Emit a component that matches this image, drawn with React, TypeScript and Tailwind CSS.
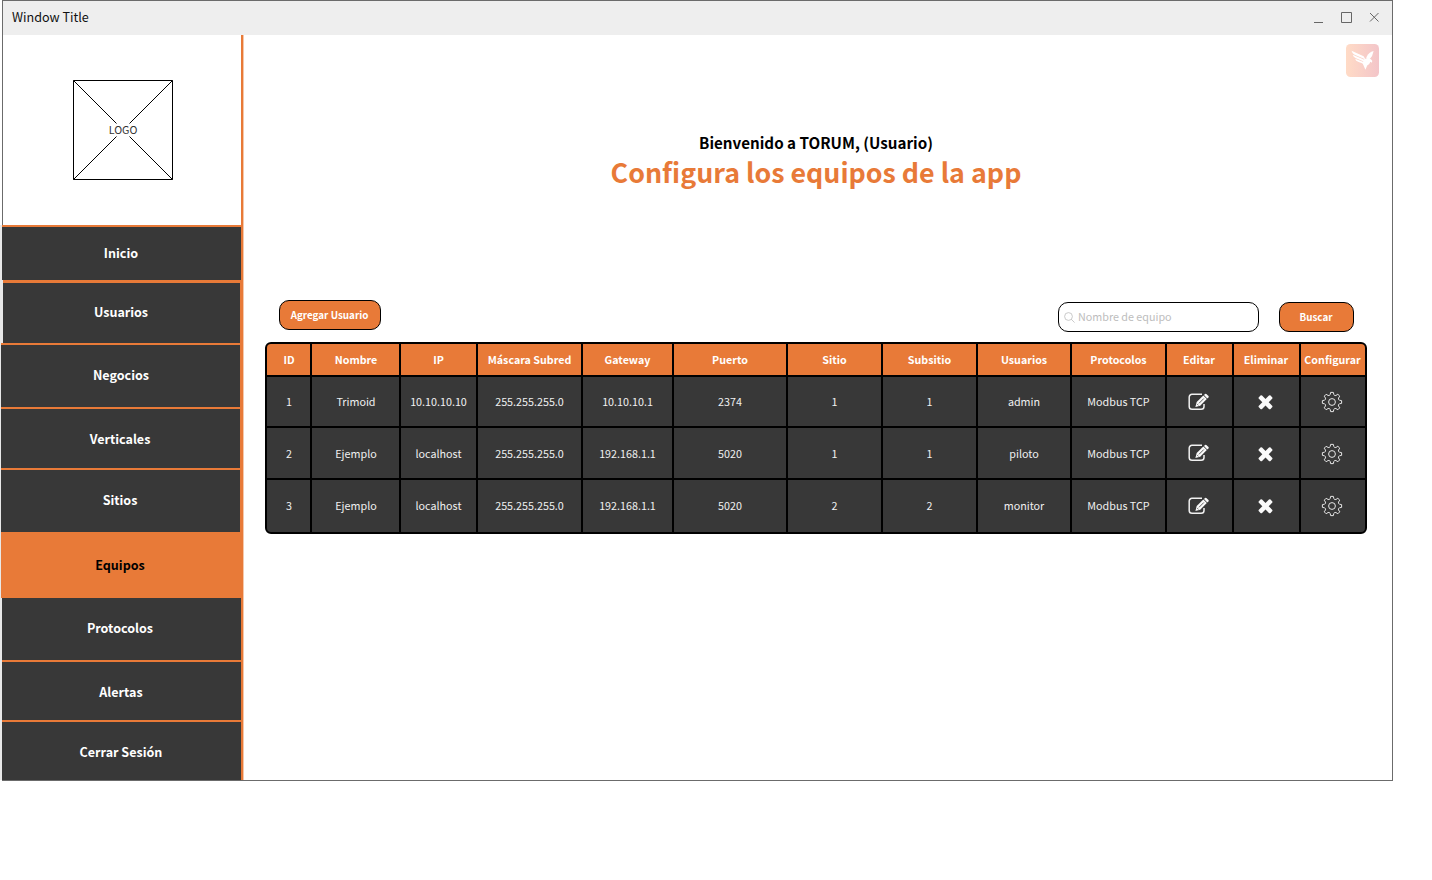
import type { ReactNode } from "react";

const columns = [
  "ID", "Nombre", "IP", "Máscara Subred", "Gateway", "Puerto", "Sitio",
  "Subsitio", "Usuarios", "Protocolos", "Editar", "Eliminar", "Configurar",
];

const rows = [
  {
    values: ["1", "Trimoid", "10.10.10.10", "255.255.255.0", "10.10.10.1", "2374", "1", "1", "admin", "Modbus TCP"],
    text: "pt-[2px]", remove: "", gear: "",
  },
  {
    values: ["2", "Ejemplo", "localhost", "255.255.255.0", "192.168.1.1", "5020", "1", "1", "piloto", "Modbus TCP"],
    text: "pt-[2px]", remove: "", gear: "pt-[2px]",
  },
  {
    values: ["3", "Ejemplo", "localhost", "255.255.255.0", "192.168.1.1", "5020", "2", "2", "monitor", "Modbus TCP"],
    text: "", remove: "pb-[2px]", gear: "",
  },
];

const menu = [
  { label: "Inicio", box: "h-[55px] border-t-2 pb-px pr-px", edge: "w-[2px]", end: "border-r-2 mr-px" },
  { label: "Usuarios", box: "h-[63px] border-t-3 pb-[2px] pr-px", edge: "w-[3px]", end: "border-r-3 mr-px" },
  { label: "Negocios", box: "h-[64px] border-t-2 pb-[2px] pl-px", edge: "w-px", end: "border-r-3 mr-px" },
  { label: "Verticales", box: "h-[61px] border-t-2 pt-px pr-px", edge: "w-px", end: "border-r-3 mr-px" },
  { label: "Sitios", box: "h-[64px] border-t-2 pb-[2px] pr-px", edge: "w-px", end: "border-r-3 mr-px" },
  { label: "Equipos", box: "h-[66px] border-t-2 pb-[2px] pr-px", edge: "w-px", end: "border-r-3 mr-px", active: true },
  { label: "Protocolos", box: "h-[62px] pb-px pr-[3px]", edge: "w-[2px]", end: "border-r-2 mr-px" },
  { label: "Alertas", box: "h-[60px] border-t-2 pt-[3px] pr-px", edge: "w-[2px]", end: "border-r-2 mr-px" },
  { label: "Cerrar Sesión", box: "h-[60px] border-t-2 pt-[3px] pr-px", edge: "w-[2px]", end: "border-r-2 mr-px" },
];

function EditIcon() {
  return (
    <svg className="mr-px" width="22" height="18" viewBox="0 0 22 18" fill="none">
      <path d="M14 1.300H4A2.800 2.800 0 0 0 1.200 4.100v9.300a2.800 2.800 0 0 0 2.800 2.800h9.200a2.800 2.800 0 0 0 2.800-2.800V11" stroke="#f0f0f0" strokeWidth="1.5" />
      <path d="M7.400 14l1.300-4.900L15.300 2.600l3.500 3.400-6.600 6.700z" fill="#fafafa" />
      <path d="M16 1.900l1-1q.7-.5 1.300 0l2.200 2.100q.5.7 0 1.300l-1.200 1.100z" fill="#fafafa" />
      <path d="M11 10.300l4.800-4.800M9.300 11.200l1.200 1.200" stroke="#383838" strokeWidth=".8" />
    </svg>
  );
}

function DeleteIcon() {
  return (
    <svg className="mr-[2px]" width="21" height="21" viewBox="0 0 1792 1792" fill="#fafafa">
      <path d="M1490 1322q0 40-28 68l-136 136q-28 28-68 28t-68-28l-294-294-294 294q-28 28-68 28t-68-28l-136-136q-28-28-28-68t28-68l294-294-294-294q-28-28-28-68t28-68l136-136q28-28 68-28t68 28l294 294 294-294q28-28 68-28t68 28l136 136q28 28 28 68t-28 68l-294 294 294 294q28 28 28 68z" />
    </svg>
  );
}

const gearPath = Array.from({ length: 8 }, (_, i) => {
  const at = (r: number, deg: number) => {
    const a = ((i * 45 + deg - 90) * Math.PI) / 180;
    return `${(11 + r * Math.cos(a)).toFixed(2)} ${(11 + r * Math.sin(a)).toFixed(2)}`;
  };
  return `${i ? "L" : "M"}${at(7.6, -14)}L${at(9.7, -8)}L${at(9.7, 8)}L${at(7.6, 14)}Q${at(6.6, 22.5)} ${at(7.6, 31)}`;
}).join("") + "Z";

function GearIcon() {
  return (
    <svg className="mr-[2px]" width="22" height="22" viewBox="0 0 22 22" fill="none" stroke="#f0f0f0" strokeWidth=".95" strokeLinejoin="round">
      <path d={gearPath} />
      <circle cx="11" cy="11" r="3.4" />
    </svg>
  );
}

function BirdLogo() {
  return (
    <svg className="ml-auto mt-[9px] mr-[13px]" width="33" height="33" viewBox="0 0 33 33">
      <defs>
        <linearGradient id="bird-bg">
          <stop offset="0" stopColor="#ffdbc6" />
          <stop offset="1" stopColor="#f3c5c9" />
        </linearGradient>
      </defs>
      <rect width="33" height="33" rx="4.5" fill="url(#bird-bg)" />
      <g fill="#fff">
        <path d="M5.500 6.800L17.600 12.300 19.500 15.600 8.200 10.500Q6.200 9.300 5.500 6.800z" />
        <path d="M6.700 10.800L19 16l.4 2.300L9.500 14Q7.500 13 6.700 10.800z" />
        <path d="M9 14.800L19.500 18.700l-1.500 1.200-6-2.200Q9.800 16.800 9 14.800z" />
        <path d="M27.600 6.900Q22.800 8 20.800 12.500l-.7 1.800 3.500.9Q26.800 12 27.600 6.900z" />
        <path d="M18.200 15.200l3.500-1.200 3.200 1.200 1.300 1.600-.2 2-1.600-1Q23.600 20.500 21.200 21.500l-1.800 4.300-1.600-3.700-1.300-2.900z" />
      </g>
    </svg>
  );
}

function Cell({ head, pad = "", children }: { head?: boolean; pad?: string; children: ReactNode }) {
  return (
    <div className={`flex items-center justify-center whitespace-nowrap ${pad} ${head
      ? "bg-[#e87a38] pt-[2px] text-[10.7px] font-bold text-white"
      : "bg-[#383838] text-[10.75px] text-[#f0f0f0]"}`}>
      {children}
    </div>
  );
}

function columnPad(i: number) {
  if (i < 2) return "pl-px";
  return i > 9 ? "pr-px" : "";
}

export default function App() {
  return (
    <div className="h-[880px] w-[1432px] overflow-hidden bg-white pl-[2px] font-['Noto_Sans_CJK_SC',sans-serif] leading-none">
      <div className="flex h-[781px] w-[1391px] flex-col border border-[#6b6b6b]">
        <header className="flex h-[34px] shrink-0 items-center bg-[#eee] pl-[9px]">
          <span className="pb-[2px] text-[12.6px] text-[#111]">Window Title</span>
          <svg className="mr-[13px] ml-auto" width="66" height="14" viewBox="0 0 66 14" fill="none" stroke="#666">
            <path d="M1 11.500h9M28.500 1.500h10v10h-10zM57 2l8.500 8.500M65.500 2L57 10.500" />
          </svg>
        </header>
        <div className="flex min-h-0 flex-1">
          <aside className="-ml-[3px] flex h-[745px] w-[244px] shrink-0 flex-col">
            <div className="ml-[3px] flex h-[190px] shrink-0">
              <div className="flex w-[238px] justify-center pt-[45px] pl-[2px]">
                <div className="relative h-[100px] w-[100px]">
                  <svg width="100" height="100" viewBox="0 0 100 100" fill="none" stroke="#000">
                    <path d="M.5.5h99v99H.5zM.5.5L43.500 43.500M99.500.5L56.500 43.500M.5 99.500L43.500 56.500M99.500 99.500L56.500 56.500" />
                  </svg>
                  <span className="absolute inset-0 flex items-center justify-center text-[10.7px] text-[#333]">LOGO</span>
                </div>
              </div>
              <div className="w-[2px] bg-[#e87a38]" />
              <div className="w-px bg-[#f6c8aa]" />
            </div>
            {menu.map((m) => (
              <div key={m.label} className="flex shrink-0 bg-[linear-gradient(to_right,#e8e8e8_50%,#f6c8aa_50%)]">
                <div className={m.edge} />
                <div className={`flex min-w-0 flex-1 items-center justify-center border-[#e87a38] text-[12.55px] font-bold ${m.box} ${m.end} ${m.active ? "bg-[#e87a38] text-black" : "bg-[#383838] text-white"}`}>
                  {m.label}
                </div>
              </div>
            ))}
          </aside>
          <main className="flex min-w-0 flex-1 flex-col">
            <BirdLogo />
            <div className="mt-[56px] flex h-[58px] flex-col items-center pr-[4px]">
              <p className="mt-[2px] text-[15.2px] font-bold text-black">Bienvenido a TORUM, (Usuario)</p>
              <h1 className="mt-[9px] text-[26.8px] font-bold text-[#e87a38]">Configura los equipos de la app</h1>
            </div>
            <div className="mt-[109px] flex h-[32px] items-start pr-[38px] pl-[35px]">
              <button className="h-[30px] w-[102px] rounded-[10px] border border-black bg-[#e87a38] pt-[2px] pr-px text-[9.85px] font-bold text-white">Agregar Usuario</button>
              <label className="mt-[2px] ml-auto flex h-[30px] w-[201px] items-center rounded-[10px] border border-black bg-white pl-[5px] text-[10.75px] text-[#bdbdbd]">
                <svg className="mr-[3px]" width="11" height="11" viewBox="0 0 11 11" fill="none" stroke="#bdbdbd" strokeWidth=".8">
                  <circle cx="4.500" cy="4.500" r="3.900" />
                  <path d="M7.200 7.200l3.400 3.400" />
                </svg>
                Nombre de equipo
              </label>
              <button className="mt-[2px] ml-[20px] h-[30px] w-[75px] rounded-[10px] border border-black bg-[#e87a38] pt-[2px] pr-px text-[9.85px] font-bold text-white">Buscar</button>
            </div>
            <div className="mt-[10px] ml-[21px] grid h-[192px] w-[1102px] grid-cols-[43px_87px_75px_103px_89px_112px_93px_93px_92px_93px_65px_65px_64px] grid-rows-[31px_49px_50px_52px] gap-[2px] overflow-hidden rounded-[6px] border-2 border-black bg-black">
              {columns.map((c, i) => <Cell head pad={columnPad(i)} key={c}>{c}</Cell>)}
              {rows.flatMap(({ values, text, remove, gear }) => [
                ...values.map((v, i) => <Cell pad={`${text} ${columnPad(i)}`} key={`${values[0]}-${i}`}>{v}</Cell>),
                <Cell key={`${values[0]}-e`}><EditIcon /></Cell>,
                <Cell key={`${values[0]}-d`} pad={remove}><DeleteIcon /></Cell>,
                <Cell key={`${values[0]}-g`} pad={gear}><GearIcon /></Cell>,
              ])}
            </div>
          </main>
        </div>
      </div>
    </div>
  );
}
